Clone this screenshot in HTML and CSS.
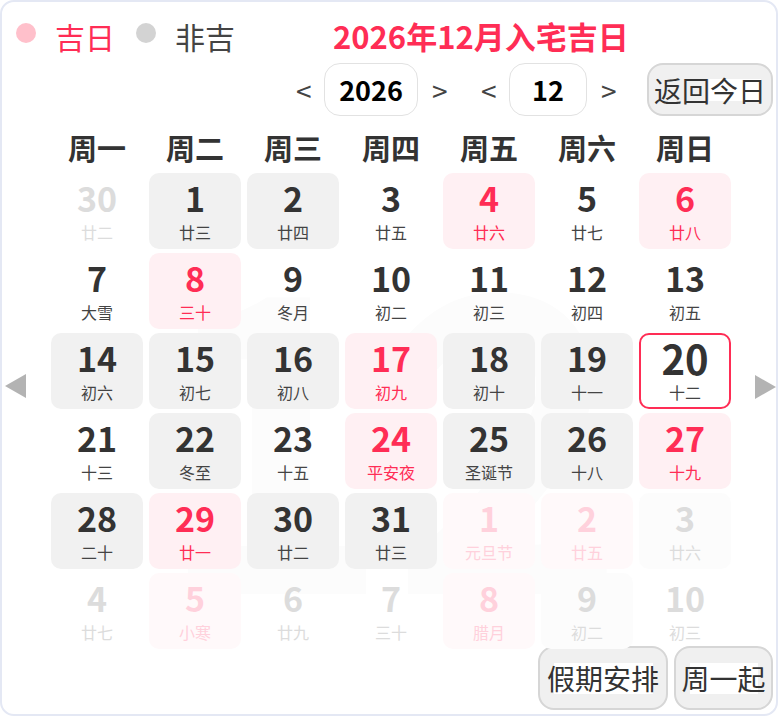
FILE: index.html
```html
<!DOCTYPE html>
<html lang="zh-CN">
<head>
<meta charset="utf-8">
<title>2026年12月入宅吉日</title>
<link rel="stylesheet" href="styles.css">
</head>
<body>
<div class="card">
  <div class="top">
    <span class="dot dot-good"></span><span class="lg lg-good">吉日</span>
    <span class="dot dot-bad"></span><span class="lg lg-bad">非吉</span>
    <h1 class="title">2026年12月入宅吉日</h1>
  </div>
  <div class="controls">
    <span class="nav">&lt;</span><span class="box box-year">2026</span><span class="nav">&gt;</span>
    <span class="nav nav-gap">&lt;</span><span class="box box-month">12</span><span class="nav">&gt;</span>
    <button class="btn btn-today">返回今日</button>
  </div>
  <div class="main">
    <div class="side side-left">
      <svg class="tri" width="21" height="24" viewBox="0 0 21 24"><polygon points="21,0 21,24 0,12" fill="#b3b3b3"/></svg>
    </div>
    <div class="cal">
      <div class="watermark" aria-hidden="true">12</div>
      <div class="weekdays">
        <span>周一</span><span>周二</span><span>周三</span><span>周四</span><span>周五</span><span>周六</span><span>周日</span>
      </div>
      <div class="grid">
        <div class="cell out"><span class="num">30</span><span class="lunar">廿二</span></div>
        <div class="cell gray"><span class="num">1</span><span class="lunar">廿三</span></div>
        <div class="cell gray"><span class="num">2</span><span class="lunar">廿四</span></div>
        <div class="cell"><span class="num">3</span><span class="lunar">廿五</span></div>
        <div class="cell pink"><span class="num">4</span><span class="lunar">廿六</span></div>
        <div class="cell"><span class="num">5</span><span class="lunar">廿七</span></div>
        <div class="cell pink"><span class="num">6</span><span class="lunar">廿八</span></div>

        <div class="cell"><span class="num">7</span><span class="lunar">大雪</span></div>
        <div class="cell pink"><span class="num">8</span><span class="lunar">三十</span></div>
        <div class="cell"><span class="num">9</span><span class="lunar">冬月</span></div>
        <div class="cell"><span class="num">10</span><span class="lunar">初二</span></div>
        <div class="cell"><span class="num">11</span><span class="lunar">初三</span></div>
        <div class="cell"><span class="num">12</span><span class="lunar">初四</span></div>
        <div class="cell"><span class="num">13</span><span class="lunar">初五</span></div>

        <div class="cell gray"><span class="num">14</span><span class="lunar">初六</span></div>
        <div class="cell gray"><span class="num">15</span><span class="lunar">初七</span></div>
        <div class="cell gray"><span class="num">16</span><span class="lunar">初八</span></div>
        <div class="cell pink"><span class="num">17</span><span class="lunar">初九</span></div>
        <div class="cell gray"><span class="num">18</span><span class="lunar">初十</span></div>
        <div class="cell gray"><span class="num">19</span><span class="lunar">十一</span></div>
        <div class="cell sel"><span class="num">20</span><span class="lunar">十二</span></div>

        <div class="cell"><span class="num">21</span><span class="lunar">十三</span></div>
        <div class="cell gray"><span class="num">22</span><span class="lunar">冬至</span></div>
        <div class="cell"><span class="num">23</span><span class="lunar">十五</span></div>
        <div class="cell pink"><span class="num">24</span><span class="lunar">平安夜</span></div>
        <div class="cell gray"><span class="num">25</span><span class="lunar">圣诞节</span></div>
        <div class="cell gray"><span class="num">26</span><span class="lunar">十八</span></div>
        <div class="cell pink"><span class="num">27</span><span class="lunar">十九</span></div>

        <div class="cell gray"><span class="num">28</span><span class="lunar">二十</span></div>
        <div class="cell pink"><span class="num">29</span><span class="lunar">廿一</span></div>
        <div class="cell gray"><span class="num">30</span><span class="lunar">廿二</span></div>
        <div class="cell gray"><span class="num">31</span><span class="lunar">廿三</span></div>
        <div class="cell out pink"><span class="num">1</span><span class="lunar">元旦节</span></div>
        <div class="cell out pink"><span class="num">2</span><span class="lunar">廿五</span></div>
        <div class="cell out gray"><span class="num">3</span><span class="lunar">廿六</span></div>

        <div class="cell out"><span class="num">4</span><span class="lunar">廿七</span></div>
        <div class="cell out pink"><span class="num">5</span><span class="lunar">小寒</span></div>
        <div class="cell out"><span class="num">6</span><span class="lunar">廿九</span></div>
        <div class="cell out"><span class="num">7</span><span class="lunar">三十</span></div>
        <div class="cell out pink"><span class="num">8</span><span class="lunar">腊月</span></div>
        <div class="cell out gray"><span class="num">9</span><span class="lunar">初二</span></div>
        <div class="cell out"><span class="num">10</span><span class="lunar">初三</span></div>
      </div>
    </div>
    <div class="side side-right">
      <svg class="tri" width="21" height="24" viewBox="0 0 21 24"><polygon points="0,0 0,24 21,12" fill="#b3b3b3"/></svg>
    </div>
  </div>
  <div class="footer">
    <button class="btn btn-holiday">假期安排</button>
    <button class="btn btn-week">周一起</button>
  </div>
</div>
</body>
</html>
```
FILE: styles.css
```css
* { box-sizing: border-box; }
html, body {
  margin: 0;
  padding: 0;
  background: #ffffff;
}
body {
  font-family: "Noto Sans CJK SC", "Noto Sans", sans-serif;
  color: #333;
}
.card {
  width: 778px;
  height: 716px;
  border: 2px solid #e4e8f4;
  border-radius: 14px;
  background: #fff;
  overflow: hidden;
}
.top {
  display: flex;
  align-items: center;
  height: 60px;
  padding: 8px 0 0 14px;
}
.dot {
  width: 20px;
  height: 20px;
  border-radius: 50%;
  margin-top: -6px;
  flex: none;
}
.dot-good { background: #ffc0cb; }
.dot-bad { background: #d3d3d3; margin-left: 21px; }
.lg {
  font-size: 30px;
  line-height: 40px;
  margin-left: 19px;
}
.lg-good { color: #ff2d55; }
.lg-bad { color: #444; }
.title {
  margin: 0 0 0 98px;
  font-size: 31px;
  line-height: 40px;
  font-weight: 700;
  color: #ff2d55;
}
.controls {
  display: flex;
  align-items: center;
  justify-content: flex-end;
  height: 53px;
  margin-top: 1px;
  padding-right: 3px;
}
.nav {
  width: 14px;
  font-size: 28px;
  color: #444;
  text-align: center;
  line-height: 30px;
  margin: 0 14px;
}
.nav-gap { margin-left: 21px; }
.box {
  display: flex;
  align-items: center;
  justify-content: center;
  height: 53px;
  border: 1.5px solid #e2e2e2;
  border-radius: 16px;
  font-size: 27px;
  font-weight: 700;
  color: #000;
}
.box-year { width: 94px; }
.box-month { width: 78px; }
.btn {
  font-family: "Noto Sans CJK SC", "Noto Sans", sans-serif;
  font-size: 28px;
  color: #333;
  border: 2px solid #d6d6d6;
  border-radius: 16px;
  padding: 0;
  background: #f0f0f0;
}
.btn-today {
  width: 126px;
  height: 53px;
  margin-left: 18px;
  background: linear-gradient(#fff, #fff) 60px 14px / 52px 22px no-repeat, #f0f0f0;
}
.main {
  display: flex;
  margin-top: 14px;
}
.side { flex: none; }
.side-left { width: 49px; padding: 244px 0 0 3px; }
.side-right { width: 45px; padding: 245px 0 0 24px; }
.tri { display: block; }
.cal {
  position: relative;
  width: 680px;
  flex: none;
}
.watermark {
  position: absolute;
  left: 0;
  right: 0;
  top: 60px;
  text-align: center;
  font-size: 400px;
  line-height: 460px;
  font-weight: 700;
  color: #fcfcfc;
  z-index: 0;
}
.weekdays {
  position: relative;
  display: grid;
  grid-template-columns: repeat(7, 92px);
  column-gap: 6px;
  height: 34px;
  line-height: 34px;
  font-size: 29px;
  font-weight: 700;
  color: #333;
  text-align: center;
}
.grid {
  position: relative;
  display: grid;
  grid-template-columns: repeat(7, 92px);
  grid-auto-rows: 76px;
  gap: 4px 6px;
  margin-top: 9px;
}
.cell {
  display: flex;
  flex-direction: column;
  align-items: center;
  border-radius: 10px;
  padding-top: 5px;
}
.num {
  font-size: 34px;
  font-weight: 700;
  line-height: 40px;
  height: 40px;
  color: #333;
}
.lunar {
  font-size: 16px;
  line-height: 22px;
  margin-top: 3px;
  color: #444;
}
.gray { background: #f1f1f1; }
.pink { background: #fff0f3; }
.pink .num, .pink .lunar { color: #ff2d55; }
.sel {
  border: 2px solid #ff2d55;
  padding-top: 3px;
}
.sel .num { font-size: 40px; }
.sel .lunar { margin-top: 3px; }
.out { background: transparent; }
.out .num { color: #dcdcdc; }
.out .lunar { color: #dcdcdc; }
.out.gray { background: #fcfcfc; }
.out.pink { background: #fff9fa; }
.out.pink .num, .out.pink .lunar { color: #ffd1dc; }
.footer {
  display: flex;
  justify-content: flex-end;
  gap: 6px;
  margin-top: -3px;
  padding-right: 3px;
}
.btn-holiday {
  width: 130px;
  height: 64px;
  background: linear-gradient(#fff, #fff) center / 99px 31px no-repeat, #f0f0f0;
}
.btn-week {
  width: 99px;
  height: 64px;
  background: linear-gradient(#fff, #fff) center / 68px 31px no-repeat, #f0f0f0;
}
```
